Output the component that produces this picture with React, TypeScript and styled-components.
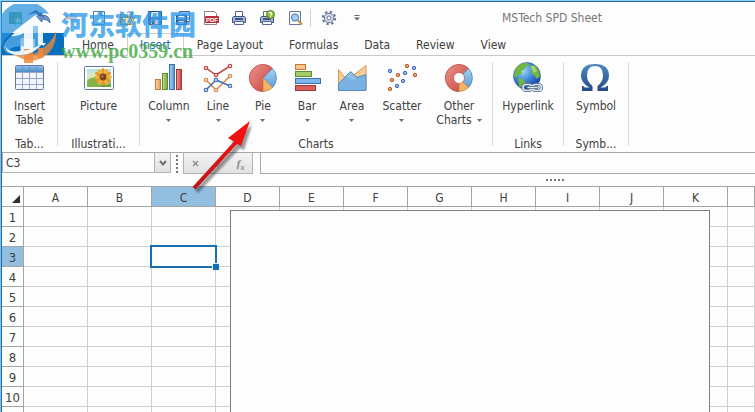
import React from "react";
import styled, { createGlobalStyle } from "styled-components";

const FONT = '"DejaVu Sans Condensed", "DejaVu Sans", "Noto Sans", sans-serif';

const GlobalStyle = createGlobalStyle`
  * { box-sizing: border-box; }
  body { margin: 0; background: #fdfdfd; }
  button, input { font-family: inherit; font-size: inherit; color: inherit; }
`;

const AppWindow = styled.div`
  position: relative;
  display: flex;
  flex-direction: column;
  height: 100vh;
  overflow: hidden;
  border-top: 1px solid #8fcdf5;
  border-left: 1px solid #7fc0ec;
  background: #fdfdfd;
  font: 12px/14px ${FONT};
  color: #404040;
`;

const Frame = styled.div`
  display: flex;
  flex-direction: column;
  flex: 1;
  min-height: 0;
  border-top: 1px solid #1f6fae;
  border-left: 1px solid #1f6fae;
`;

const PlainButton = styled.button`
  border: 0;
  margin: 0;
  padding: 0;
  background: transparent;
`;

const TitleBar = styled.header`
  display: flex;
  align-items: center;
  flex: none;
  height: 31px;
`;

const QuickAccess = styled.div`
  display: flex;
  align-items: center;
  gap: 2px;
`;

const QuickButton = styled(PlainButton)`
  display: flex;
  align-items: center;
  justify-content: center;
  width: 26px;
  height: 26px;
`;

const QuickSeparator = styled.span`
  width: 1px;
  height: 18px;
  margin-right: 3px;
  background: #d4d4d4;
`;

const Title = styled.h1`
  margin: 0 0 0 132px;
  font-size: 12px;
  font-weight: 400;
  color: #777;
  white-space: nowrap;
`;

const TabBar = styled.nav`
  display: flex;
  flex: none;
  height: 23px;
  border-bottom: 1px solid #c8c8c8;
`;

const FileTab = styled(PlainButton)`
  display: flex;
  align-items: center;
  justify-content: center;
  gap: 5px;
  width: 62px;
  height: 22px;
  margin-right: 5px;
  background: #0570c0;
`;

const Tab = styled(PlainButton)<{ $active?: boolean }>`
  height: 23px;
  padding: 0 12px;
  border: 1px solid ${(p) => (p.$active ? "#cfcfcf" : "transparent")};
  border-bottom: 0;
  background: ${(p) => (p.$active ? "#fdfdfd" : "transparent")};
  color: ${(p) => (p.$active ? "#1a6fb5" : "#404040")};
  white-space: nowrap;
`;

const Ribbon = styled.div`
  display: flex;
  flex: none;
  height: 96px;
  padding: 6px 0 0;
`;

const Group = styled.section<{ $width: number }>`
  display: flex;
  flex-direction: column;
  flex: none;
  align-items: center;
  width: ${(p) => p.$width}px;
  height: 84px;
  border-right: 1px solid #dadada;
`;

const GroupTools = styled.div`
  display: flex;
  flex: none;
  justify-content: center;
  height: 73px;
`;

const GroupName = styled.div`
  line-height: 18px;
  white-space: nowrap;
`;

const Tool = styled(PlainButton)<{ $width: number }>`
  display: flex;
  flex-direction: column;
  align-items: center;
  flex: none;
  gap: 5px;
  width: ${(p) => p.$width}px;
  height: 66px;
  line-height: 14px;
`;

const ToolLabel = styled.span`
  display: flex;
  flex-direction: column;
  align-items: center;
  white-space: nowrap;
`;

const LabelLine = styled.span`
  display: flex;
  align-items: center;
  gap: 5px;
  height: 14px;
`;

const FormulaBar = styled.div`
  display: flex;
  flex: none;
  height: 22px;
  border-top: 1px solid #a8a8a8;
`;

const NameBox = styled.div`
  display: flex;
  width: 169px;
  height: 20px;
  border: 1px solid #b4b4b4;
  border-top: 0;
`;

const NameInput = styled.input`
  flex: 1;
  min-width: 0;
  border: 0;
  outline: 0;
  padding: 0 3px;
  background: transparent;
`;

const NameArrow = styled(PlainButton)`
  display: flex;
  align-items: center;
  justify-content: center;
  width: 16px;
  border-left: 1px solid #b4b4b4;
  background: linear-gradient(#f4f4f4, #e0e0e0);
`;

const Grip = styled.div`
  display: flex;
  flex-direction: column;
  justify-content: center;
  gap: 2px;
  width: 2px;
  margin: 0 5px;
`;

const Dot = styled.span`
  width: 2px;
  height: 2px;
  background: #777;
`;

const EditButtons = styled.div`
  display: flex;
  width: 70px;
  border: 1px solid #b4b4b4;
  border-top: 0;
  background: linear-gradient(#f3f3f3, #e2e2e2);
`;

const EditButton = styled(PlainButton)`
  display: flex;
  flex: 1;
  align-items: center;
  justify-content: center;
`;

const FxText = styled.span`
  font: italic 700 11px/12px "Liberation Serif", serif;
  color: #888;

  sub {
    font-size: 8px;
    line-height: 0;
  }
`;

const FormulaInput = styled.input`
  flex: 1;
  min-width: 0;
  margin-left: 7px;
  border: 1px solid #a8a8a8;
  border-top: 0;
  border-right: 0;
  outline: 0;
  background: #fdfdfd;
`;

const Splitter = styled.div`
  display: flex;
  flex: none;
  gap: 2px;
  height: 12px;
  padding: 5px 0 0 544px;
`;

const Sheet = styled.main`
  position: relative;
  flex: 1;
  min-height: 0;
  overflow: hidden;
`;

const Cells = styled.table`
  width: 100%;
  table-layout: fixed;
  border-collapse: separate;
  border-spacing: 0;
`;

const NumberCol = styled.col`
  width: 22px;
`;

const LetterCol = styled.col`
  width: 64px;
`;

const ColumnHead = styled.th<{ $selected?: boolean }>`
  height: 21px;
  padding: 2px 0 0;
  border: 1px solid #a4a4a4;
  border-left: 0;
  background: ${(p) => (p.$selected ? "#92bfe0" : "#fdfdfd")};
  font-weight: 400;
`;

const Corner = styled(ColumnHead)`
  padding: 0 3px 3px 0;
  text-align: right;
  vertical-align: bottom;
  line-height: 0;
`;

const RowHead = styled.th<{ $selected?: boolean }>`
  height: 20px;
  padding: 2px 0 0;
  border: solid #a4a4a4;
  border-width: 0 1px 1px 0;
  background: ${(p) => (p.$selected ? "#92bfe0" : "#fdfdfd")};
  font-size: 13px;
  font-weight: 400;
`;

const Cell = styled.td`
  position: relative;
  height: 20px;
  padding: 0;
  border: solid #cfcfcf;
  border-width: 0 1px 1px 0;
`;

const Selection = styled.div`
  position: absolute;
  z-index: 1;
  inset: -2px;
  border: 2px solid #1a6fae;
`;

const FillHandle = styled.span`
  position: absolute;
  right: -4px;
  bottom: -4px;
  width: 7px;
  height: 7px;
  border: solid #fdfdfd;
  border-width: 1px 0 0 1px;
  background: #0f70bd;
`;

const ChartFrame = styled.div`
  position: absolute;
  left: 228px;
  top: 24px;
  bottom: -2px;
  width: 480px;
  border: 1px solid #808080;
  background: #fdfdfd;
`;

const Watermark = styled.div`
  position: absolute;
  left: -1px;
  top: 3px;
  display: flex;
  gap: 1px;
  pointer-events: none;
`;

const WatermarkText = styled.div`
  display: flex;
  flex-direction: column;
  padding-top: 4px;
  white-space: nowrap;
`;

const WatermarkName = styled.span`
  font: 900 27px/32px "Noto Sans CJK SC", sans-serif;
  color: rgba(45, 155, 235, 0.8);
`;

const WatermarkUrl = styled.span`
  font: 700 20px/22px "Liberation Serif", serif;
  color: rgba(60, 165, 60, 0.8);
`;

const Pointer = styled.svg`
  position: absolute;
  left: 184px;
  top: 112px;
  pointer-events: none;
`;

const Caret = ({ color = "#707070" }: { color?: string }) => (
  <svg width="5" height="3" viewBox="0 0 5 3" aria-hidden="true">
    <path d="M0 0h5L2.500 3z" fill={color} />
  </svg>
);

const Big = ({ children }: { children: React.ReactNode }) => (
  <svg width="32" height="32" viewBox="0 0 32 32" fill="none" aria-hidden="true">
    {children}
  </svg>
);

const Small = ({ children }: { children: React.ReactNode }) => (
  <svg width="16" height="16" viewBox="0 0 16 16" fill="none" aria-hidden="true">
    {children}
  </svg>
);

const TableIcon = () => (
  <Big>
    <defs>
      <linearGradient id="tableHead" x1="0" y1="0" x2="0" y2="1">
        <stop stopColor="#8dbfe8" />
        <stop offset="1" stopColor="#4a8cc9" />
      </linearGradient>
    </defs>
    <rect x="1.500" y="3.500" width="28" height="24" rx="1" fill="#f3f6fd" stroke="#6478a8" />
    <rect x="2" y="4" width="27" height="6" fill="url(#tableHead)" />
    <path d="M2 10.500h27M2 16.500h27M2 22.500h27M8.500 10v17M15.500 10v17M22.500 10v17" stroke="#98a6cc" />
    <path d="M8.500 4v6M15.500 4v6M22.500 4v6" stroke="#5d97cb" />
  </Big>
);

const PictureIcon = () => (
  <Big>
    <defs>
      <linearGradient id="photo" x1="0" y1="0" x2="0" y2="1">
        <stop stopColor="#b4e0f5" />
        <stop offset=".45" stopColor="#e3ecb0" />
        <stop offset="1" stopColor="#5d9a3c" />
      </linearGradient>
    </defs>
    <rect x="1.500" y="4.500" width="29" height="23" rx="1" fill="#fff" stroke="#5d76aa" />
    <rect x="4" y="7" width="24" height="18" fill="url(#photo)" />
    <path d="M4 19q5-5 9-3l6 9H4z" fill="#83b44c" />
    <path d="M20 17v8" stroke="#4e7b25" strokeWidth="2" />
    {Array.from({ length: 12 }, (_, i) => (
      <ellipse key={i} cx="20" cy="9.500" rx="1.700" ry="3.500" fill={i % 2 ? "#f3b03c" : "#e39a2c"} transform={`rotate(${i * 30} 20 15)`} />
    ))}
    <circle cx="20" cy="15" r="3.400" fill="#79431a" />
    <circle cx="19.300" cy="14.300" r="1.500" fill="#a96b35" />
  </Big>
);

const ColumnIcon = () => (
  <Big>
    <defs>
      <linearGradient id="colO"><stop stopColor="#fbd9a8" /><stop offset="1" stopColor="#e39a4e" /></linearGradient>
      <linearGradient id="colG"><stop stopColor="#c5e296" /><stop offset="1" stopColor="#6ea637" /></linearGradient>
      <linearGradient id="colB"><stop stopColor="#a6d3f3" /><stop offset="1" stopColor="#4f93cf" /></linearGradient>
      <linearGradient id="colR"><stop stopColor="#ee9890" /><stop offset="1" stopColor="#c5453f" /></linearGradient>
    </defs>
    <rect x="2.500" y="17.500" width="5" height="10" fill="url(#colO)" stroke="#c27b39" />
    <rect x="9.500" y="11.500" width="5" height="16" fill="url(#colG)" stroke="#5e8f33" />
    <rect x="16.500" y="2.500" width="5" height="25" fill="url(#colB)" stroke="#3c71ac" />
    <rect x="23.500" y="7.500" width="5" height="20" fill="url(#colR)" stroke="#a93632" />
  </Big>
);

const LineIcon = () => {
  const series: [string, number[][]][] = [
    ["#bf4a43", [[4, 6], [14, 13], [28, 4]]],
    ["#dc8648", [[4, 18], [14, 28], [28, 14]]],
    ["#4272b8", [[4, 28], [14, 18], [28, 24]]],
  ];
  return (
    <Big>
      {series.map(([color, pts]) => (
        <g key={color} stroke={color}>
          <polyline points={pts.map((p) => p.join(",")).join(" ")} strokeWidth="1.500" />
          {pts.map(([x, y]) => (
            <circle key={x} cx={x} cy={y} r="1.700" fill="#f5e4e0" strokeWidth="1.200" />
          ))}
        </g>
      ))}
    </Big>
  );
};

const PieIcon = ({ hole = false }: { hole?: boolean }) => (
  <Big>
    <defs>
      <linearGradient id="pieR" x1="0" y1="0" x2="1" y2="1"><stop stopColor="#ef928a" /><stop offset="1" stopColor="#c4453f" /></linearGradient>
      <linearGradient id="pieB" x1="0" y1="0" x2="0" y2="1"><stop stopColor="#a9d2f2" /><stop offset="1" stopColor="#5c9fd8" /></linearGradient>
    </defs>
    <path d="M16 16V29.500A13.500 13.500 0 1 1 25.500 6.500z" fill="url(#pieR)" stroke="#b5443f" strokeWidth=".8" />
    <path d="M16 16L25.500 6.500A13.500 13.500 0 0 1 25.500 25.500z" fill="url(#pieB)" stroke="#4c85bd" strokeWidth=".8" />
    <path d="M16 16L25.500 25.500A13.500 13.500 0 0 1 16 29.500z" fill="#f3b465" stroke="#cd8541" strokeWidth=".8" />
    {hole && <circle cx="16" cy="16" r="5.500" fill="#fdfdfd" stroke="#b5605a" strokeWidth=".8" />}
  </Big>
);

const BarIcon = () => (
  <Big>
    <rect x="4.500" y="2.500" width="10" height="5" fill="#f6c58b" stroke="#c27b39" />
    <rect x="4.500" y="9.500" width="16" height="5" fill="#a3cd69" stroke="#5e8f33" />
    <rect x="4.500" y="16.500" width="25" height="5" fill="#7db8e8" stroke="#3c71ac" />
    <rect x="4.500" y="23.500" width="20" height="5" fill="#d8625b" stroke="#a93632" />
  </Big>
);

const AreaIcon = () => (
  <Big>
    <path d="M2.500 28V7.500L11 18 30 3.500V28z" fill="#f8cd94" stroke="#d29a55" />
    <path d="M2.500 28.500V22L14.500 9.500 21 15.500 30 12.500V28.500z" fill="#85bdea" fillOpacity=".93" stroke="#4b83bf" />
    <path d="M2.500 28.500V22L10 14l6 5 14-7v16.500z" fill="#63a5df" fillOpacity=".5" />
  </Big>
);

const ScatterIcon = () => {
  const blue = [[4, 9], [19, 11], [28, 6], [17, 19], [11, 24]];
  const red = [[21, 4], [12, 13], [29, 13], [6, 18], [4, 27]];
  return (
    <Big>
      {blue.map(([x, y]) => <circle key={`${x}-${y}`} cx={x} cy={y} r="1.700" fill="#8cbcf0" stroke="#3c66b8" />)}
      {red.map(([x, y]) => <circle key={`${x}-${y}`} cx={x} cy={y} r="1.700" fill="#f0a070" stroke="#b95324" />)}
    </Big>
  );
};

const GlobeIcon = () => (
  <Big>
    <defs>
      <radialGradient id="sea" cx=".35" cy=".3" r=".75">
        <stop stopColor="#a6dcfb" />
        <stop offset=".5" stopColor="#3e86dd" />
        <stop offset="1" stopColor="#153d9b" />
      </radialGradient>
    </defs>
    <circle cx="15" cy="14" r="13.500" fill="url(#sea)" stroke="#3a63a5" strokeWidth=".7" />
    <path d="M4 6Q8 1 15 1l3 2-4 1-1 3-4 2 1 3-4 1-3 3-1-2zM6 16l5 1 3 4-3 5-4-2zM18 4l5-1 4 6 1 5-3 3-3-4-3-1 1-4z" fill="#72b742" />
    <path d="M18 4l4 0 3 5-3 2z" fill="#a3d667" />
    <rect x="11" y="22.500" width="9" height="6" rx="3" stroke="#49617e" strokeWidth="3.200" />
    <rect x="20.500" y="22.500" width="9" height="6" rx="3" stroke="#49617e" strokeWidth="3.200" />
    <rect x="11" y="22.500" width="9" height="6" rx="3" stroke="#dae6f2" strokeWidth="1.700" />
    <rect x="20.500" y="22.500" width="9" height="6" rx="3" stroke="#dae6f2" strokeWidth="1.700" />
    <path d="M16 25.500h9" stroke="#49617e" strokeWidth="3" strokeLinecap="round" />
    <path d="M16 25.500h9" stroke="#dae6f2" strokeWidth="1.500" strokeLinecap="round" />
  </Big>
);

const SymbolIcon = () => (
  <Big>
    <defs>
      <linearGradient id="omega" x1="0" y1="0" x2="0" y2="1"><stop stopColor="#4c8abf" /><stop offset="1" stopColor="#244a86" /></linearGradient>
    </defs>
    <path
      d="M2 29V24h1.500q.5 1.500 2 1.500H9.500Q1 21 1 14 1 2 15 2t14 12q0 7-8.500 11.500h4q1.500 0 2-1.500H28v5H17.500v-5Q23 20 23 13.500 23 4 15 4T7 13.500Q7 20 12.500 24v5z"
      fill="url(#omega)"
    />
  </Big>
);

const BookIcon = () => (
  <Small>
    <path d="M1 3l3-1 3 1v12l-3-1-3 1z" fill="#dceafa" stroke="#f7fbff" />
    <path d="M7.500 3.500h7v10h-7z" fill="#fff" stroke="#dceafa" />
    <path d="M9 6.500h4M9 8.500h4M9 10.500h4" stroke="#6fa3d3" />
  </Small>
);

const WorkbookIcon = () => (
  <Small>
    <path d="M2.500 2.500h12v11h-12z" fill="#67b06a" stroke="#3f8d52" />
    <path d="M3 6.500h11M3 10h11M6.500 3v10" stroke="#3f8d52" />
    <path d="M11 6l1.500 3 3 .5-2.200 2 .7 3-3-1.500-3 1.500.7-3-2.200-2 3-.5z" fill="#e7f9dc" stroke="#4fa552" strokeWidth=".7" />
  </Small>
);
const UndoIcon = () => (
  <Small>
    <path d="M1 7l6-5v3q8 0 8 8-2-4-8-4v3z" fill="#6f93c9" stroke="#375c9a" strokeWidth=".8" />
  </Small>
);
const RedoIcon = () => (
  <Small>
    <path d="M14 7.500L8.500 3v3Q2 5 1 10q3-2 7.500-1v3z" fill="#c4cad4" stroke="#9aa2b0" strokeWidth=".8" />
  </Small>
);
const NewIcon = () => (
  <Small>
    <path d="M2.500 1.500h11v13h-11z" fill="#fff" stroke="#65759b" />
    <path d="M9.500 1.500v4h4" stroke="#65759b" fill="#dce5f3" />
  </Small>
);
const OpenIcon = () => (
  <Small>
    <path d="M1.500 14V4.500h4l1 1.500h6v8z" fill="#eabf69" stroke="#b58131" />
    <path d="M3.500 7.500h12l-3 7H1.500z" fill="#fbe09a" stroke="#b58131" />
    <path d="M8 3q3-3 5 1M13.500 1.500v3h-3" stroke="#5380b5" />
  </Small>
);
const SaveIcon = () => (
  <Small>
    <path d="M1.500 1.500h13v13h-12l-1-1z" fill="#4e7ab5" stroke="#26477f" />
    <path d="M4 2h8v5H4z" fill="#e8f0fb" />
    <path d="M4 9.500h8v5H4z" fill="#bdc9dc" />
    <path d="M5 10.500h2.500v3.500H5z" fill="#26477f" />
  </Small>
);
const SaveAsIcon = () => (
  <Small>
    <path d="M4.500 1.500h10v10h-10z" fill="#fff" stroke="#4b6590" />
    <path d="M7 4.500h5" stroke="#7792bd" />
    <path d="M1.500 5.500h10v9h-10z" fill="#4e7ab5" stroke="#26477f" />
    <path d="M3.500 6h6v3h-6z" fill="#e8f0fb" />
    <path d="M4 11h5v3H4z" fill="#c5d0e2" />
  </Small>
);
const PdfIcon = () => (
  <Small>
    <path d="M1.500 1.500h10l2 2v11h-12z" fill="#fff" stroke="#9b7d83" />
    <rect x="2" y="6" width="14" height="7" rx="1" fill="#b92f37" />
    <text x="3" y="12" fontSize="6" fontWeight="700" fill="#fff" fontFamily="Liberation Sans, sans-serif">PDF</text>
  </Small>
);
const PrintShape = () => (
  <>
    <path d="M4.500 1.500h7v6h-7z" fill="#fff" stroke="#55688f" />
    <path d="M1.500 7.500l1-1h11l1 1v5h-13z" fill="#a9bbd8" stroke="#3c5382" />
    <path d="M4 8h8v2H4z" fill="#40557f" />
    <path d="M3.500 11.500h9v3h-9z" fill="#f2f6fb" stroke="#55688f" />
  </>
);
const PrintIcon = () => (
  <Small>
    <PrintShape />
  </Small>
);
const QuickPrintIcon = () => (
  <Small>
    <PrintShape />
    <circle cx="11.500" cy="4.500" r="4" fill="#8fbe2f" stroke="#55831b" />
    <path d="M10 3.500Q10.500 2 12 2.500t0 2.500v.7M11.700 6.500v1" stroke="#fff" strokeWidth="1.200" />
  </Small>
);
const PreviewIcon = () => (
  <Small>
    <path d="M2.500 1.500h11v13h-11z" fill="#fff" stroke="#65759b" />
    <circle cx="8" cy="7.500" r="3.600" fill="#9dd0f2" stroke="#3f6fa8" />
    <path d="M11 10.500l4 4" stroke="#c98a3d" strokeWidth="2" />
  </Small>
);
const GearIcon = () => (
  <Small>
    <circle cx="8" cy="8" r="6.200" stroke="#687896" strokeWidth="2" strokeDasharray="2.430 2.430" />
    <circle cx="8" cy="8" r="4.700" fill="#d8dfeb" stroke="#687896" />
    <circle cx="8" cy="8" r="2" fill="#fdfdfd" stroke="#687896" />
  </Small>
);
const MoreIcon = () => (
  <Small>
    <path d="M5.500 5.500h5" stroke="#666" />
    <path d="M5 7.500h6l-3 3z" fill="#666" />
  </Small>
);

const quickActions: [string, React.FC][] = [
  ["Workbook", WorkbookIcon],
  ["Undo", UndoIcon],
  ["Redo", RedoIcon],
  ["New", NewIcon],
  ["Open", OpenIcon],
  ["Save", SaveIcon],
  ["Save as", SaveAsIcon],
  ["Export to PDF", PdfIcon],
  ["Print", PrintIcon],
  ["Quick print", QuickPrintIcon],
  ["Print preview", PreviewIcon],
];

const tabs = ["Home", "Insert", "Page Layout", "Formulas", "Data", "Review", "View"];

type ToolSpec = { lines: string[]; icon: React.ReactNode; width: number; menu?: boolean };

const groups: { name: string; width: number; tools: ToolSpec[] }[] = [
  { name: "Tab...", width: 56, tools: [{ lines: ["Insert", "Table"], icon: <TableIcon />, width: 50 }] },
  { name: "Illustrati...", width: 82, tools: [{ lines: ["Picture"], icon: <PictureIcon />, width: 60 }] },
  {
    name: "Charts",
    width: 353,
    tools: [
      { lines: ["Column"], icon: <ColumnIcon />, width: 50, menu: true },
      { lines: ["Line"], icon: <LineIcon />, width: 48, menu: true },
      { lines: ["Pie"], icon: <PieIcon />, width: 42, menu: true },
      { lines: ["Bar"], icon: <BarIcon />, width: 46, menu: true },
      { lines: ["Area"], icon: <AreaIcon />, width: 44, menu: true },
      { lines: ["Scatter"], icon: <ScatterIcon />, width: 56, menu: true },
      { lines: ["Other", "Charts"], icon: <PieIcon hole />, width: 58, menu: true },
    ],
  },
  { name: "Links", width: 71, tools: [{ lines: ["Hyperlink"], icon: <GlobeIcon />, width: 64 }] },
  { name: "Symb...", width: 65, tools: [{ lines: ["Symbol"], icon: <SymbolIcon />, width: 56 }] },
];

const letters = ["A", "B", "C", "D", "E", "F", "G", "H", "I", "J", "K"];
const rows = Array.from({ length: 10 }, (_, i) => i + 1);

const Dots = () => (
  <>
    {[0, 1, 2, 3, 4].map((i) => (
      <Dot key={i} />
    ))}
  </>
);

const RibbonTool = ({ lines, icon, width, menu }: ToolSpec) => (
  <Tool $width={width}>
    {icon}
    <ToolLabel>
      {lines.map((line, i) => (
        <LabelLine key={line}>
          {line}
          {menu && i === 1 && <Caret />}
        </LabelLine>
      ))}
      {menu && lines.length === 1 && (
        <LabelLine>
          <Caret />
        </LabelLine>
      )}
    </ToolLabel>
  </Tool>
);

const WatermarkLogo = () => (
  <svg width="60" height="60" viewBox="0 0 60 60" fill="none" aria-hidden="true">
    <path d="M2 42A27 27 0 0 1 49 10L42 9 34 12 12 29Q3 35 2 42z" fill="#2d93dd" fillOpacity=".75" />
    <path d="M3 43Q6 34 17 29L34 14 38 22V44L24 48V42Q14 42 10 45L9 50Q4 48 3 43z" fill="#5fb0ea" fillOpacity=".7" />
    <path d="M56 27Q57 45 42 54 28 61 14 50q16 4 26-4 12-7 16-19z" fill="#e88b3c" fillOpacity=".8" />
    <path d="M24 44h9v15h-9zM38 44h5v10h-5z" fill="#f08a3c" fillOpacity=".85" />
    <path d="M11 32L36 12l7 9v20h-5V22h-5v23h-9V29q-7 4-13 3z" fill="#fff" fillOpacity=".9" />
    <path d="M5 41q2 8 15 6Q36 46 44 37 36 50 22 51 6 52 5 41z" fill="#fff" fillOpacity=".9" />
    <path d="M27 11l9-5 9 7-6-1-3-3z" fill="#1c62ad" fillOpacity=".75" />
  </svg>
);

export default function App() {
  return (
    <AppWindow>
      <GlobalStyle />
      <Frame>
        <TitleBar>
          <QuickAccess>
            {quickActions.map(([label, Icon]) => (
              <QuickButton key={label} aria-label={label}>
                <Icon />
              </QuickButton>
            ))}
            <QuickSeparator />
            <QuickButton aria-label="Options">
              <GearIcon />
            </QuickButton>
            <QuickButton aria-label="Customize toolbar">
              <MoreIcon />
            </QuickButton>
          </QuickAccess>
          <Title>MSTech SPD Sheet</Title>
        </TitleBar>
        <TabBar>
          <FileTab aria-label="File">
            <BookIcon />
            <Caret color="#fff" />
          </FileTab>
          {tabs.map((tab) => (
            <Tab key={tab} $active={tab === "Insert"}>
              {tab}
            </Tab>
          ))}
        </TabBar>
        <Ribbon>
          {groups.map((group) => (
            <Group key={group.name} $width={group.width}>
              <GroupTools>
                {group.tools.map((tool) => (
                  <RibbonTool key={tool.lines[0]} {...tool} />
                ))}
              </GroupTools>
              <GroupName>{group.name}</GroupName>
            </Group>
          ))}
        </Ribbon>
        <FormulaBar>
          <NameBox>
            <NameInput aria-label="Name box" defaultValue="C3" />
            <NameArrow aria-label="Show names">
              <svg width="8" height="6" viewBox="0 0 8 6" fill="none" aria-hidden="true">
                <path d="M1 1l3 3.500L7 1" stroke="#707070" strokeWidth="2" />
              </svg>
            </NameArrow>
          </NameBox>
          <Grip>
            <Dots />
          </Grip>
          <EditButtons>
            <EditButton aria-label="Cancel">
              <svg width="7" height="7" viewBox="0 0 7 7" aria-hidden="true">
                <path d="M1 1l5 5M6 1L1 6" stroke="#909090" strokeWidth="1.500" />
              </svg>
            </EditButton>
            <EditButton aria-label="Enter">
              <svg width="8" height="8" viewBox="0 0 8 8" fill="none" aria-hidden="true">
                <path d="M1 4l2 3 4-6" stroke="#909090" strokeWidth="1.500" />
              </svg>
            </EditButton>
            <EditButton aria-label="Insert function">
              <FxText>
                f<sub>x</sub>
              </FxText>
            </EditButton>
          </EditButtons>
          <FormulaInput aria-label="Formula" />
        </FormulaBar>
        <Splitter>
          <Dots />
        </Splitter>
        <Sheet>
          <Cells>
            <colgroup>
              <NumberCol />
              {letters.map((l) => (
                <LetterCol key={l} />
              ))}
              <col />
            </colgroup>
            <thead>
              <tr>
                <Corner aria-label="Select all">
                  <svg width="8" height="8" viewBox="0 0 8 8" aria-hidden="true">
                    <path d="M8 0v8H0z" fill="#303030" />
                  </svg>
                </Corner>
                {letters.map((l) => (
                  <ColumnHead key={l} $selected={l === "C"} scope="col">
                    {l}
                  </ColumnHead>
                ))}
                <ColumnHead />
              </tr>
            </thead>
            <tbody>
              {rows.map((n) => (
                <tr key={n}>
                  <RowHead $selected={n === 3} scope="row">
                    {n}
                  </RowHead>
                  {letters.map((l) => (
                    <Cell key={l}>
                      {n === 3 && l === "C" && (
                        <Selection>
                          <FillHandle />
                        </Selection>
                      )}
                    </Cell>
                  ))}
                  <Cell />
                </tr>
              ))}
              <tr>
                <RowHead />
                {letters.map((l) => (
                  <Cell key={l} />
                ))}
                <Cell />
              </tr>
            </tbody>
          </Cells>
          <ChartFrame />
        </Sheet>
      </Frame>
      <Watermark>
        <WatermarkLogo />
        <WatermarkText>
          <WatermarkName>河东软件园</WatermarkName>
          <WatermarkUrl>www.pc0359.cn</WatermarkUrl>
        </WatermarkText>
      </Watermark>
      <Pointer width="80" height="84" viewBox="0 0 80 84" aria-hidden="true">
        <defs>
          <filter id="soft">
            <feGaussianBlur stdDeviation="1" />
          </filter>
          <linearGradient id="arrow" x1="0" y1="1" x2="1" y2="0">
            <stop stopColor="#b81818" />
            <stop offset="1" stopColor="#ff1010" />
          </linearGradient>
        </defs>
        <path d="M10 77L51 32l-5-3 21-17-8 25-4-2L13 80z" fill="#000" fillOpacity=".4" filter="url(#soft)" />
        <path d="M7.500 74L49 28.500 43 25 65 8 56 33 52 31 10.500 76.500z" fill="url(#arrow)" />
      </Pointer>
    </AppWindow>
  );
}
